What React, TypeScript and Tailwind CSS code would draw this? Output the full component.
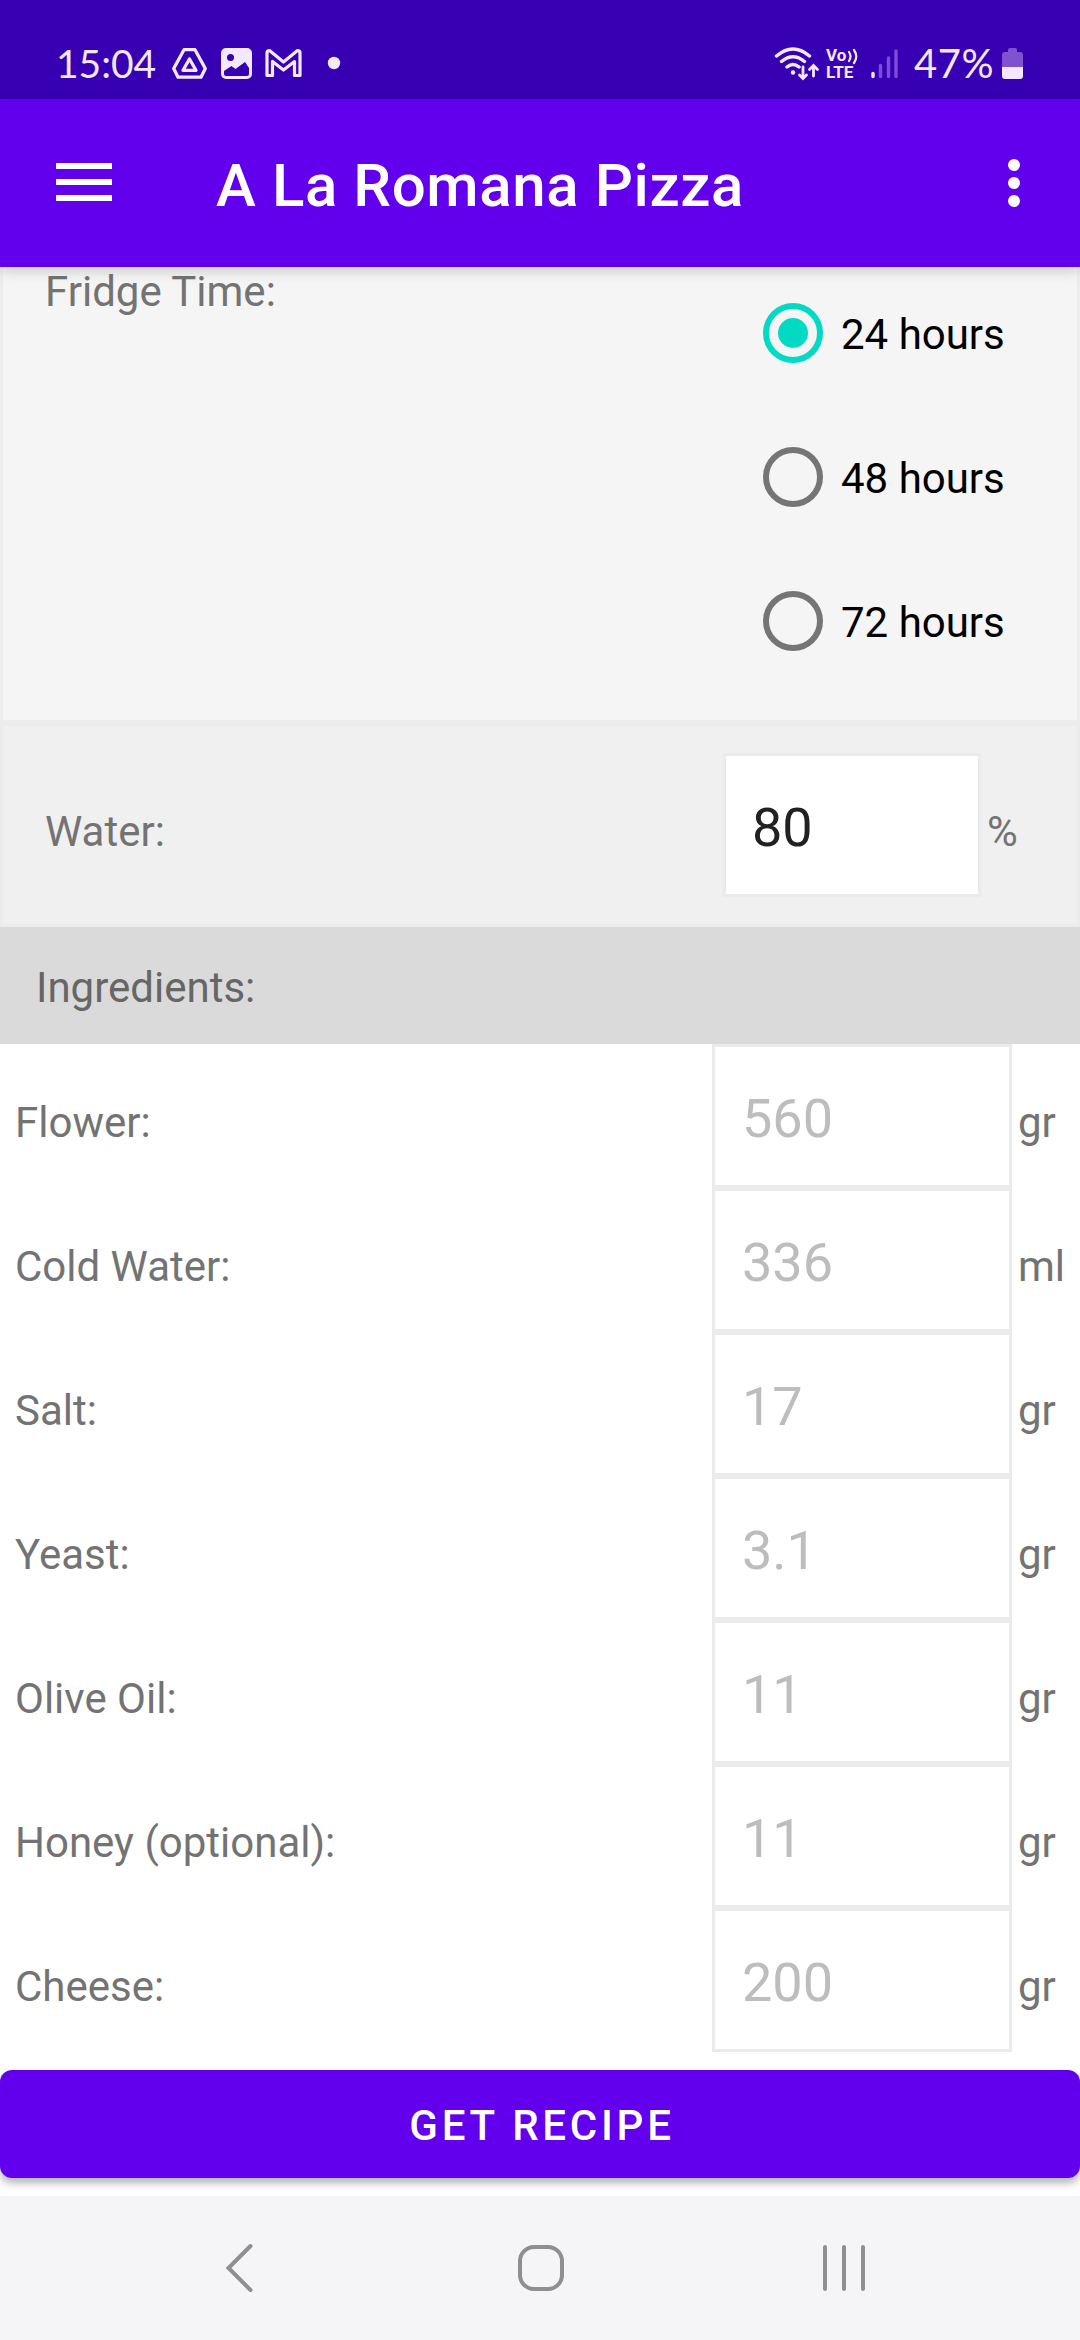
import { useState } from 'react';

type Ingredient = {
  label: string;
  hint: string;
  unit: string;
};

const fridgeTimes = ['24 hours', '48 hours', '72 hours'];

const ingredients: Ingredient[] = [
  { label: 'Flower:', hint: '560', unit: 'gr' },
  { label: 'Cold Water:', hint: '336', unit: 'ml' },
  { label: 'Salt:', hint: '17', unit: 'gr' },
  { label: 'Yeast:', hint: '3.1', unit: 'gr' },
  { label: 'Olive Oil:', hint: '11', unit: 'gr' },
  { label: 'Honey (optional):', hint: '11', unit: 'gr' },
  { label: 'Cheese:', hint: '200', unit: 'gr' },
];

function StatusBar() {
  return (
    <div className="flex h-[99px] items-center justify-between bg-[#3700b3] pt-[27px] pr-[56px] pl-[56px] font-['Lato'] text-[39px] text-[#f3e8ff]">
      <div className="flex items-center">
        <span className="w-[116px] leading-none">15:04</span>
        <svg className="h-9 w-[170px]" viewBox="172 45 170 36" fill="none">
          {/* drive */}
          <g stroke="#f3e8ff" strokeWidth="3.300" strokeLinejoin="round">
            <path d="M184 49.700h11l10.300 18.800-4.300 8.700h-23l-4.300-8.700z" />
            <path d="M189.500 59l6.500 11.300h-13z" />
          </g>
          {/* gallery */}
          <path
            fill="#f3e8ff"
            fillRule="evenodd"
            d="M226 48h21a5 5 0 0 1 5 5v21a5 5 0 0 1-5 5h-21a5 5 0 0 1-5-5V53a5 5 0 0 1 5-5zM230.500 54a3.500 3.500 0 1 0 0 7a3.500 3.500 0 1 0 0-7zM224 71v3q0 2 2 2h21q2 0 2-2v-6l-4-6-9.500 7-4-3z"
          />
          {/* gmail */}
          <path
            stroke="#f3e8ff"
            strokeWidth="3.200"
            strokeLinejoin="round"
            d="M267 53q0-2.500 2.500-2.500l14 11.500 14-11.500q2.500 0 2.500 2.500v22.500h-5.500v-14l-11 8.500-11-8.500v14h-5.500z"
          />
          <circle cx="334" cy="63" r="6.200" fill="#f3e8ff" />
        </svg>
      </div>

      <div className="flex items-center">
        <svg className="h-9 w-[46px]" viewBox="774 45 46 36" fill="none" stroke="#f3e8ff" strokeLinecap="round">
          <path strokeWidth="3.400" d="M776.500 56q16.500-14 33 0M781.500 61.500q11.500-9.500 23 0M787 67q6-5 12 0" />
          <circle cx="793" cy="72.500" r="2.200" fill="#f3e8ff" stroke="none" />
          <path strokeWidth="2.800" d="M803 67v11M799.500 75l3.500 3.500 3.500-3.500M813.500 76v-10M809.500 69.500l4-4 4 4" />
        </svg>
        <div className="relative ml-1.5 flex h-9 w-[32px] flex-col pt-0.5 font-['Roboto'] text-[17px] leading-[17px] font-bold">
          <span>Vo</span>
          <span>LTE</span>
          <svg className="absolute top-0.5 left-[21px] h-[18px] w-3" viewBox="0 0 12 18" fill="none" stroke="#f3e8ff" strokeWidth="2.200" strokeLinecap="round">
            <path d="M2 5q3 4.500 0 9M7 3q4.500 6.500 0 13" />
          </svg>
        </div>
        <svg className="ml-[12px] h-9 w-[28px]" viewBox="870 45 28 36" stroke="#7c4ddb" strokeWidth="3.400" strokeLinecap="round">
          <path d="M873 73.500v3" stroke="#f3e8ff" />
          <path d="M880.500 65.500v11M888.500 58v18.500M896 51v25.500" />
        </svg>
        <span className="ml-[16px] w-[81px] text-[40px] leading-none tracking-[0.5px]">47%</span>
        <svg className="ml-[7px] h-9 w-[22px]" viewBox="1002 45 22 36">
          <path fill="#7f52cf" d="M1008 52v-2q0-2 2-2h5q2 0 2 2v2h3q3 0 3 3v12h-21v-12q0-3 3-3z" />
          <path fill="#f3e8ff" d="M1002 67h21v9q0 3-3 3h-15q-3 0-3-3z" />
        </svg>
      </div>
    </div>
  );
}

function AppBar() {
  return (
    <header className="relative z-10 flex h-[168px] items-center bg-[#6200ee] pr-[60px] pl-14 text-white shadow-[0_4px_12px_rgba(0,0,0,0.18)]">
      <button className="flex w-14 flex-col gap-2.5 pb-0.5">
        <span className="h-1.5 bg-white" />
        <span className="h-1.5 bg-white" />
        <span className="h-1.5 bg-white" />
      </button>
      <h1 className="ml-[104px] flex-1 pt-[5px] text-[60px] leading-none font-medium tracking-[0.6px]">
        A La Romana Pizza
      </h1>
      <button className="flex flex-col gap-1.5">
        <span className="h-3 w-3 rounded-full bg-white" />
        <span className="h-3 w-3 rounded-full bg-white" />
        <span className="h-3 w-3 rounded-full bg-white" />
      </button>
    </header>
  );
}

function NavBar() {
  return (
    <nav className="flex h-36 items-center bg-[#f5f5f8] pl-[225px]">
      <svg className="h-[50px] w-[28px]" viewBox="0 0 28 50" fill="none" stroke="#8f8f8f" strokeWidth="4" strokeLinecap="round">
        <path d="M25.500 3L3.500 25l22 22" />
      </svg>
      <span className="ml-[265px] h-[46px] w-[46px] rounded-[16px] border-4 border-[#8f8f8f]" />
      <div className="ml-[259px] flex gap-[15px]">
        <span className="h-[46px] w-1 rounded-full bg-[#8f8f8f]" />
        <span className="h-[46px] w-1 rounded-full bg-[#8f8f8f]" />
        <span className="h-[46px] w-1 rounded-full bg-[#8f8f8f]" />
      </div>
    </nav>
  );
}

export default function App() {
  const [fridgeTime, setFridgeTime] = useState(fridgeTimes[0]);

  return (
    <div className="flex h-[2340px] w-[1080px] flex-col overflow-hidden bg-white font-['Roboto',sans-serif] text-[42px] leading-[50px] text-[#737373]">
      <StatusBar />
      <AppBar />

      <main className="flex flex-1 flex-col">
        {/* Fridge time */}
        <section className="flex h-[456px] justify-between border-x-3 border-b-3 border-[#ececec] bg-[#f5f5f5] pl-[42px]">
          <span>Fridge Time:</span>
          <div className="flex w-[314px] flex-col">
            {fridgeTimes.map((time, index) => (
              <button
                key={time}
                onClick={() => setFridgeTime(time)}
                className={`flex h-36 items-center text-black ${index === 0 ? '-mt-1.5' : ''}`}
              >
                <span
                  className={`flex h-15 w-15 items-center justify-center rounded-full border-6 ${
                    fridgeTime === time ? 'border-[#03dac5]' : 'border-[#757575]'
                  }`}
                >
                  {fridgeTime === time && <span className="h-[30px] w-[30px] rounded-full bg-[#03dac5]" />}
                </span>
                <span className="ml-[18px] pt-1">{time}</span>
              </button>
            ))}
          </div>
        </section>

        {/* Water */}
        <section className="flex h-[204px] items-baseline border-3 border-[#ececec] bg-[#f0f0f0] pt-[27px] pl-[42px]">
          <span className="w-[678px]">Water:</span>
          <div className="h-36 w-[258px] border-3 border-[#ebebeb] bg-white pt-[40px] pl-[26px] text-[54px] leading-[64px] text-[#212121]">
            80
          </div>
          <span className="ml-1.5">%</span>
        </section>

        <h2 className="h-[117px] bg-[#dadada] pt-[36px] pl-9 text-[#666666]">Ingredients:</h2>

        {/* Ingredients */}
        {ingredients.map((item) => (
          <div key={item.label} className="flex h-36 items-baseline pl-[15px]">
            <span className="w-[697px]">{item.label}</span>
            <div className="h-36 w-[300px] border-3 border-[#ebebeb] pt-[40px] pl-[27px] text-[54px] leading-[64px] text-[#bdbdbd]">
              {item.hint}
            </div>
            <span className="ml-1.5">{item.unit}</span>
          </div>
        ))}

        <button className="mt-[18px] h-[108px] rounded-xl bg-[#6200ee] pt-[3px] pl-1 font-medium tracking-[3.75px] text-white shadow-[0_5px_8px_rgba(0,0,0,0.3)]">
          GET RECIPE
        </button>
      </main>

      <NavBar />
    </div>
  );
}
